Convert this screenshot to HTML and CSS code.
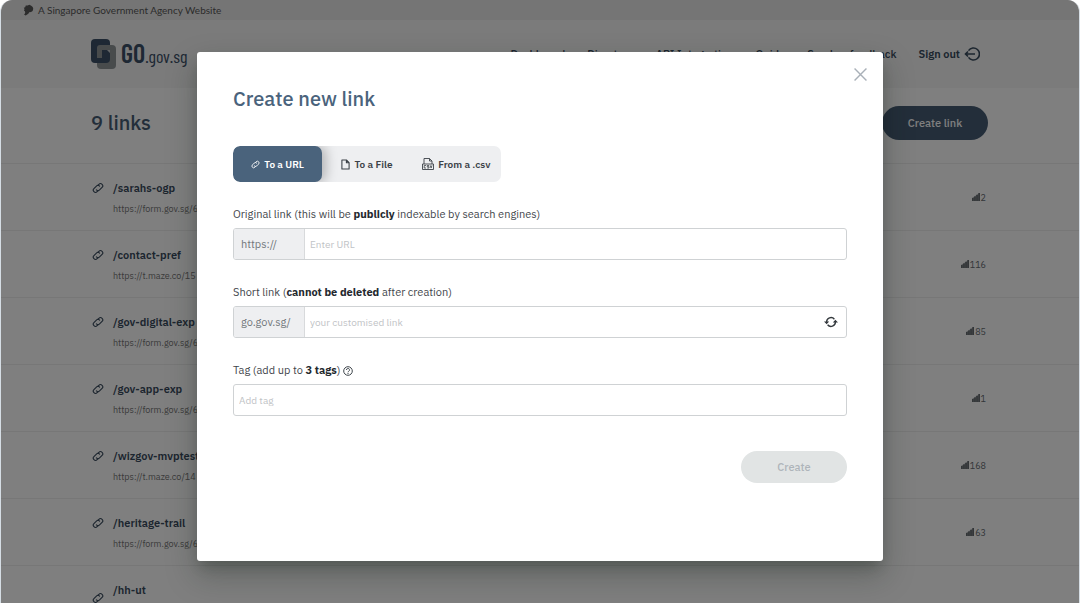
FILE: index.html
```html
<!DOCTYPE html>
<html lang="en">
<head>
  <meta charset="UTF-8" />
  <meta name="viewport" content="width=device-width, initial-scale=1" />
  <title>GO.gov.sg</title>
  <link rel="stylesheet" href="styles.css">
</head>
<body>

<!-- Shared icons -->
<svg class="sprite" aria-hidden="true">
  <symbol id="icon-link" viewBox="0 0 24 24">
    <g transform="rotate(-45 12 12)" fill="none" stroke="currentColor" stroke-width="2.2" stroke-linecap="round">
      <path d="M8.500 16H5.500a4.500 4.500 0 0 1 0-9h7a4.500 4.500 0 0 1 4.500 4.500"/>
      <path d="M15.500 8h3a4.500 4.500 0 0 1 0 9h-7a4.500 4.500 0 0 1-4.500-4.500"/>
    </g>
  </symbol>
  <symbol id="icon-bars" viewBox="0 0 8 8">
    <path fill="currentColor" d="M0 5h1.7v3H0zM2.1 3.4h1.7V8H2.1zM4.2 1.8h1.7V8H4.2zM6.3 0H8v8H6.3z"/>
    <path fill="currentColor" opacity=".6" d="M0 8V5l8-5v8z"/>
  </symbol>
</svg>

<div class="page">
  <div class="banner">
    <svg class="lion" viewBox="0 0 12 12"><path fill="currentColor" d="M3 1l2 .2L7 .3l2 1 1.600 1.400.6 2L10.500 7 8.800 8.300l-2 .2-1 1.600L3 12l-1.800-.8 1.200-2L2.200 7.600.9 6.200l.9-1L.8 3.500 2.400 3z"/></svg>
    <span>A Singapore Government Agency Website</span>
  </div>

  <header class="header">
    <a class="logo" href="#">
      <svg class="logo-mark" viewBox="0 0 26 30">
        <rect x="6" y="6" width="19" height="24" rx="4" fill="#909699"/>
        <rect x="0" y="0" width="19" height="24" rx="4" fill="#3c5068"/>
        <path d="M19 6v5h-8v8H6V9a3 3 0 0 1 3-3z" fill="#909699"/>
        <path d="M12 11h4l3 3v-3z" fill="#c4cacf"/>
      </svg>
      <span class="logo-go">GO</span><span class="logo-rest">.gov.sg</span>
    </a>
    <nav class="nav">
      <a href="#">Dashboard</a>
      <a href="#">Directory</a>
      <a href="#">API Integration</a>
      <a href="#">Guide</a>
      <a href="#">Send us feedback</a>
      <a class="sign-out" href="#">Sign out
        <svg viewBox="0 0 16 14" fill="none" stroke="currentColor" stroke-width="1.6"><path d="M4.500 3.600A6 6 0 1 1 4.500 10.400M11 7H1.500M4 4.500L1.500 7 4 9.500"/></svg>
      </a>
    </nav>
  </header>

  <main>
    <div class="links-head">
      <h1>9 links</h1>
      <button class="create-link" type="button">Create link</button>
    </div>
    <ul class="links">
      <li><svg class="link-icon"><use href="#icon-link"/></svg><div class="link-text"><h2>/sarahs-ogp</h2><p>https://form.gov.sg/6</p></div><span class="clicks"><svg><use href="#icon-bars"/></svg>2</span></li>
      <li><svg class="link-icon"><use href="#icon-link"/></svg><div class="link-text"><h2>/contact-pref</h2><p>https://t.maze.co/15</p></div><span class="clicks"><svg><use href="#icon-bars"/></svg>116</span></li>
      <li><svg class="link-icon"><use href="#icon-link"/></svg><div class="link-text"><h2>/gov-digital-exp</h2><p>https://form.gov.sg/6</p></div><span class="clicks"><svg><use href="#icon-bars"/></svg>85</span></li>
      <li><svg class="link-icon"><use href="#icon-link"/></svg><div class="link-text"><h2>/gov-app-exp</h2><p>https://form.gov.sg/6</p></div><span class="clicks"><svg><use href="#icon-bars"/></svg>1</span></li>
      <li><svg class="link-icon"><use href="#icon-link"/></svg><div class="link-text"><h2>/wizgov-mvptest</h2><p>https://t.maze.co/14</p></div><span class="clicks"><svg><use href="#icon-bars"/></svg>168</span></li>
      <li><svg class="link-icon"><use href="#icon-link"/></svg><div class="link-text"><h2>/heritage-trail</h2><p>https://form.gov.sg/6</p></div><span class="clicks"><svg><use href="#icon-bars"/></svg>63</span></li>
      <li class="file-row"><svg class="link-icon"><use href="#icon-link"/></svg><div class="link-text"><h2>/hh-ut</h2></div></li>
    </ul>
  </main>

  <!-- Create link modal -->
  <div class="overlay">
    <form class="modal" role="dialog" aria-labelledby="modalTitle">
      <button class="close" type="button" aria-label="Close">
        <svg viewBox="0 0 12 12" fill="none" stroke="currentColor" stroke-width="1.3"><path d="M.5.5l11 11M11.500.5l-11 11"/></svg>
      </button>
      <h2 class="modal-title" id="modalTitle">Create new link</h2>

      <div class="tabs">
        <button class="tab active" type="button"><svg><use href="#icon-link"/></svg>To a URL</button>
        <button class="tab" type="button">
          <svg class="file-icon" viewBox="0 0 10 12" fill="none" stroke="currentColor" stroke-width="1.2" stroke-linejoin="round"><path d="M1 1h5l3 3v7H1zM6 1v3h3"/></svg>To a File
        </button>
        <button class="tab" type="button">
          <svg class="csv-icon" viewBox="0 0 12 12" fill="none" stroke="currentColor" stroke-width=".9" stroke-linejoin="round"><path d="M2 6V.5h5.500L10 3v3M7.500.5V3H10M.5 6h11v5.500H.5z"/><path stroke-width=".8" d="M4 7.500H2.200v2.500H4M7 7.500H5.200v1.200H7V10H5.200M8.200 7.300l.9 2.700.9-2.700"/></svg>From a .csv
        </button>
      </div>

      <div class="field">
        <label for="longUrl">Original link (this will be <b>publicly</b> indexable by search engines)</label>
        <div class="input-box"><span class="prefix">https://</span><input id="longUrl" type="text" placeholder="Enter URL"></div>
      </div>

      <div class="field">
        <label for="shortUrl">Short link (<b>cannot be deleted</b> after creation)</label>
        <div class="input-box">
          <span class="prefix">go.gov.sg/</span><input id="shortUrl" type="text" placeholder="your customised link">
          <button class="refresh" type="button" aria-label="Generate link">
            <svg viewBox="0 0 14 12"><path fill="none" stroke="currentColor" stroke-width="1.400" d="M2.600 6.500V6a4.400 4.400 0 0 1 7.800-2.800M11.400 5.500V6a4.400 4.400 0 0 1-7.800 2.800"/><path fill="currentColor" d="M0 5.400h5.200L2.600 8.200zM8.800 6.600H14l-2.600-2.800z"/></svg>
          </button>
        </div>
      </div>

      <div class="field">
        <label for="tags">Tag (add up to <b>3 tags</b>)
          <svg class="help" viewBox="0 0 10 10" fill="none" stroke="currentColor"><circle cx="5" cy="5" r="4.300"/><path d="M3.500 4a1.500 1.500 0 1 1 2.300 1.200Q5 5.600 5 6.300M5 7v1"/></svg>
        </label>
        <div class="input-box"><input id="tags" type="text" placeholder="Add tag"></div>
      </div>

      <button class="submit" type="submit" disabled>Create</button>
    </form>
  </div>
</div>

</body>
</html>
```
FILE: styles.css
```css
* {
  box-sizing: border-box;
}

body {
  margin: 0;
  background: #fff;
  color: #384a51;
  font-family: 'IBM Plex Sans', Roboto, sans-serif;
  font-size: 12px;
}

button,
input {
  font-family: inherit;
  font-size: inherit;
}

button {
  border: none;
  cursor: pointer;
}

h1,
h2,
p,
ul {
  margin: 0;
  padding: 0;
}

.sprite {
  position: absolute;
  width: 0;
  height: 0;
}

.page {
  position: relative;
  height: 100vh;
  overflow: hidden;
  border-radius: 12px 12px 0 0;
  border: solid #d5dde4;
  border-width: 0 1px;
  background: #fff;
}

.banner {
  display: flex;
  align-items: center;
  gap: 4px;
  height: 20px;
  padding-left: 22px;
  background: #ebebeb;
  color: #585858;
  font-family: Lato, sans-serif;
  font-size: 10px;
}

.lion {
  width: 11px;
  height: 12px;
}

.header {
  display: flex;
  align-items: center;
  justify-content: space-between;
  height: 68px;
  padding: 0 99px 0 90px;
  background: #f6f6f6;
}

.logo {
  display: flex;
  align-items: baseline;
  color: #3c5068;
  text-decoration: none;
  font-family: 'Barlow Condensed', 'Roboto Condensed', 'IBM Plex Sans Condensed', 'Open Sans Condensed', Roboto, sans-serif;
  line-height: 28px;
}

.logo-mark {
  align-self: center;
  width: 26px;
  height: 30px;
  margin-right: 4px;
}

.logo-go {
  font-size: 26px;
  font-weight: 600;
}

.logo-rest {
  font-size: 18px;
}

.nav {
  display: flex;
  align-items: center;
  gap: 22px;
}

.nav a {
  color: #384a5d;
  text-decoration: none;
  font-size: 11px;
  font-weight: 500;
}

.nav .sign-out {
  display: flex;
  align-items: center;
  gap: 4px;
  font-weight: 600;
}

.sign-out svg {
  width: 16px;
  height: 14px;
}

.links-head {
  display: flex;
  align-items: center;
  justify-content: space-between;
  height: 75px;
  padding: 0 91px 6px 90px;
}

.links-head h1 {
  color: #465d75;
  font-size: 20px;
  font-weight: 500;
}

.create-link {
  width: 106px;
  height: 34px;
  border-radius: 17px;
  background: #465d75;
  color: #fff;
  font-size: 11px;
  font-weight: 500;
}

.links {
  list-style: none;
}

.links li {
  display: flex;
  height: 67px;
  padding: 15px 93px 0 91px;
  border-top: 1px solid #efefef;
}

.link-icon {
  width: 12px;
  height: 12px;
  margin: 3px 9px 0 0;
  color: #384a5d;
}

.file-row .link-icon {
  margin-top: 11px;
}

.link-text h2 {
  color: #384a5d;
  font-size: 11px;
  line-height: 18px;
  font-weight: 600;
}

.link-text p {
  margin-top: 4px;
  color: #767676;
  font-size: 9px;
  line-height: 16px;
}

.clicks {
  display: flex;
  align-items: center;
  gap: 1px;
  height: 36px;
  margin-left: auto;
  color: #666c72;
  font-size: 9px;
}

.clicks svg {
  width: 8px;
  height: 8px;
}

.overlay {
  position: absolute;
  inset: 0;
  display: flex;
  align-items: center;
  justify-content: center;
  padding-top: 10px;
  background: rgba(0, 0, 0, 0.5);
}

.modal {
  position: relative;
  width: 686px;
  max-width: 90%;
  padding: 34px 36px 78px;
  border-radius: 3px;
  background: #fff;
  box-shadow: 0 8px 12px -4px rgba(20, 30, 25, 0.25), 0 14px 30px 2px rgba(20, 30, 25, 0.25);
}

.close {
  position: absolute;
  top: 16px;
  right: 16px;
  display: flex;
  padding: 0;
  background: none;
  color: #a9b0b8;
}

.close svg {
  width: 13px;
  height: 13px;
}

.modal-title {
  color: #4a637c;
  font-size: 20px;
  line-height: 26px;
  font-weight: 500;
}

.tabs {
  display: flex;
  width: 268px;
  height: 36px;
  margin: 34px 0 22px;
  border-radius: 7px;
  background: #eeeff1;
  overflow: hidden;
}

.tab {
  display: flex;
  flex: 1;
  align-items: center;
  justify-content: center;
  gap: 4px;
  padding: 0;
  background: none;
  color: #3c4248;
  font-size: 10px;
  font-weight: 600;
  white-space: nowrap;
}

.tab.active {
  border-radius: 7px;
  background: #4a637c;
  color: #fff;
  box-shadow: 4px 0 12px rgba(0, 0, 0, 0.25);
}

.tab svg {
  width: 9px;
  height: 9px;
}

.tab .file-icon {
  width: 9px;
  height: 11px;
}

.tab .csv-icon {
  width: 12px;
  height: 12px;
}

.field {
  margin-bottom: 22px;
}

.field label {
  display: flow-root;
  height: 20px;
  margin-bottom: 4px;
  color: #3f464c;
  font-size: 11px;
  line-height: 20px;
}

.field b {
  color: #24292e;
}

.help {
  width: 10px;
  height: 10px;
  vertical-align: -2px;
}

.input-box {
  display: flex;
  align-items: center;
  height: 32px;
  border: 1px solid #cfd2d4;
  border-radius: 3px;
  overflow: hidden;
}

.prefix {
  width: 71px;
  height: 100%;
  padding-left: 7px;
  border-right: 1px solid #d8dadc;
  background: #eeeff1;
  color: #72777b;
  font-size: 11px;
  line-height: 30px;
}

.input-box input {
  flex: 1;
  min-width: 0;
  height: 100%;
  padding: 0 5px;
  border: none;
  outline: none;
  background: none;
  font-size: 10px;
}

.input-box input::placeholder {
  color: #bfc3c6;
}

.refresh {
  display: flex;
  margin-right: 8px;
  padding: 0;
  background: none;
  color: #33383d;
}

.refresh svg {
  width: 14px;
  height: 12px;
}

.submit {
  display: block;
  width: 106px;
  height: 32px;
  margin: 35px 0 0 auto;
  border-radius: 16px;
  background: #e1e4e4;
  color: #aeb4ba;
  font-size: 11px;
  font-weight: 500;
}
```
